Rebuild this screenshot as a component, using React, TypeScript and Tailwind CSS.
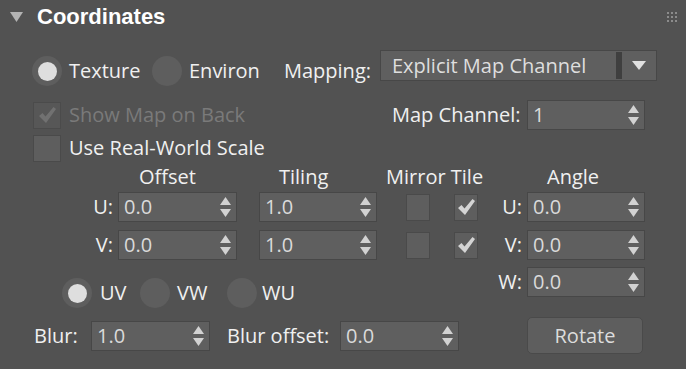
import React from 'react'

function Arrows() {
  return (
    <svg width="11" height="20" viewBox="0 0 11 20" className="shrink-0">
      <path d="M5.5 0 L11 8 L0 8 Z" fill="#d2d2d2" />
      <path d="M0 12 L11 12 L5.5 20 Z" fill="#d2d2d2" />
    </svg>
  )
}

function Spinner({ value, className = '' }: { value: string; className?: string }) {
  return (
    <div
      className={`flex h-[30px] shrink-0 items-center justify-between border border-[#474747] bg-[#5f5f5f] pl-[5px] pr-[5px] ${className}`}
    >
      <span className="text-[#dadada]">{value}</span>
      <Arrows />
    </div>
  )
}

function Radio({ on = false }: { on?: boolean }) {
  return (
    <div className="flex size-[30px] shrink-0 items-center justify-center rounded-full bg-[#5e5e5e]">
      {on && <div className="size-[19px] rounded-full bg-[#dedede]" />}
    </div>
  )
}

function Check({ color }: { color: string }) {
  return (
    <svg width="17" height="16" viewBox="0 0 17 16">
      <path d="M0 9 L3.5 6 L6.5 9.5 L14.5 0 L17 2 L7 16 Z" fill={color} />
    </svg>
  )
}

function Checkbox({
  checked = false,
  disabled = false,
  className = '',
}: {
  checked?: boolean
  disabled?: boolean
  className?: string
}) {
  return (
    <div
      className={`flex shrink-0 items-center justify-center border ${
        disabled ? 'border-[#4b4b4b] bg-[#575757]' : 'border-[#4a4a4a] bg-[#5e5e5e]'
      } ${className}`}
    >
      {checked && <Check color={disabled ? '#717171' : '#d4d4d4'} />}
    </div>
  )
}

export default function App() {
  return (
    <div className="h-[369px] w-[686px] overflow-hidden bg-[#525252] font-['Open_Sans',sans-serif] text-[20px] leading-[24px] text-[#f0f0f0]">
      {/* Rollout header */}
      <div className="flex h-[34px] items-center">
        <svg width="13" height="10" viewBox="0 0 13 10" className="ml-[10px]">
          <path d="M0 0 L13 0 L6.5 10 Z" fill="#b3b3b3" />
        </svg>
        <span className="ml-[14px] font-['Liberation_Sans',Arial,sans-serif] text-[22px] leading-[26px] font-bold text-white">
          Coordinates
        </span>
        <div className="mr-[9px] ml-auto grid grid-cols-3 gap-[2px]">
          {Array.from({ length: 9 }).map((_, i) => (
            <div key={i} className="size-[2px] bg-[#8c8c8c]" />
          ))}
        </div>
      </div>

      {/* Texture / Environ / Mapping */}
      <div className="mt-[22px] flex h-[30px] items-center pl-[32px]">
        <Radio on />
        <span className="ml-[7px] w-[83px] shrink-0">Texture</span>
        <Radio />
        <span className="ml-[7px] w-[95px] shrink-0">Environ</span>
        <span className="w-[96px] shrink-0">Mapping:</span>
        <div className="-mt-[6px] flex h-[31px] w-[277px] shrink-0 items-stretch self-start border border-[#474747] bg-[#5f5f5f]">
          <span className="flex w-[235px] items-center pl-[11px] text-[#dedede]">Explicit Map Channel</span>
          <div className="my-[1px] w-[6px] bg-[#3f3f3f]" />
          <div className="flex flex-1 items-center justify-center">
            <svg width="14" height="9" viewBox="0 0 14 9">
              <path d="M0 0 L14 0 L7 9 Z" fill="#e0e0e0" />
            </svg>
          </div>
        </div>
      </div>

      {/* Show Map on Back / Map Channel */}
      <div className="mt-[14px] flex h-[30px] items-center pl-[33px]">
        <Checkbox checked disabled className="h-[27px] w-[28px]" />
        <span className="ml-[8px] w-[323px] shrink-0 text-[#7a7a7a]">Show Map on Back</span>
        <span className="w-[135px] shrink-0">Map Channel:</span>
        <Spinner value="1" className="h-[29px] w-[118px]" />
      </div>

      {/* Use Real-World Scale */}
      <div className="mt-[3px] flex h-[30px] items-center pl-[33px]">
        <Checkbox className="h-[27px] w-[28px]" />
        <span className="ml-[8px]">Use Real-World Scale</span>
      </div>

      <div className="mt-[2px] flex">
        {/* Offset / Tiling / Mirror Tile */}
        <div className="w-[496px] shrink-0">
          <div className="flex h-[24px] items-center">
            <span className="ml-[139px] w-[140px] shrink-0">Offset</span>
            <span className="w-[107px] shrink-0">Tiling</span>
            <span>Mirror Tile</span>
          </div>
          <div className="mt-[3px] flex h-[30px] items-center">
            <span className="w-[113px] shrink-0 text-right">U:</span>
            <Spinner value="0.0" className="ml-[5px] w-[119px]" />
            <Spinner value="1.0" className="ml-[22px] w-[118px]" />
            <Checkbox className="ml-[29px] h-[27px] w-[24px]" />
            <Checkbox checked className="ml-[24px] h-[27px] w-[24px]" />
          </div>
          <div className="mt-[8px] flex h-[30px] items-center">
            <span className="w-[113px] shrink-0 text-right">V:</span>
            <Spinner value="0.0" className="ml-[5px] w-[119px]" />
            <Spinner value="1.0" className="ml-[22px] w-[118px]" />
            <Checkbox className="ml-[29px] h-[27px] w-[24px]" />
            <Checkbox checked className="ml-[24px] h-[27px] w-[24px]" />
          </div>
          <div className="mt-[18px] flex h-[30px] items-center pl-[62px]">
            <Radio on />
            <span className="ml-[8px] w-[40px] shrink-0">UV</span>
            <Radio />
            <span className="ml-[7px] w-[50px] shrink-0">VW</span>
            <Radio />
            <span className="ml-[5px]">WU</span>
          </div>
          <div className="mt-[13px] flex h-[30px] items-center pl-[34px]">
            <span className="w-[57px] shrink-0">Blur:</span>
            <Spinner value="1.0" className="h-[29px] w-[119px]" />
            <span className="ml-[17px] w-[113px] shrink-0">Blur offset:</span>
            <Spinner value="0.0" className="h-[29px] w-[119px]" />
          </div>
        </div>

        {/* Angle */}
        <div className="w-[190px] shrink-0">
          <div className="flex h-[24px] items-center">
            <span className="ml-[51px]">Angle</span>
          </div>
          <div className="mt-[3px] flex h-[30px] items-center">
            <span className="w-[26px] shrink-0 text-right">U:</span>
            <Spinner value="0.0" className="ml-[5px] w-[118px]" />
          </div>
          <div className="mt-[8px] flex h-[30px] items-center">
            <span className="w-[26px] shrink-0 text-right">V:</span>
            <Spinner value="0.0" className="ml-[5px] w-[118px]" />
          </div>
          <div className="mt-[7px] flex h-[30px] items-center">
            <span className="w-[26px] shrink-0 text-right">W:</span>
            <Spinner value="0.0" className="ml-[5px] w-[118px]" />
          </div>
          <button className="mt-[20px] ml-[31px] flex h-[37px] w-[116px] items-center justify-center rounded-[5px] border border-[#4a4a4a] bg-[#5e5e5e] text-[#dcdcdc]">
            Rotate
          </button>
        </div>
      </div>
    </div>
  )
}
